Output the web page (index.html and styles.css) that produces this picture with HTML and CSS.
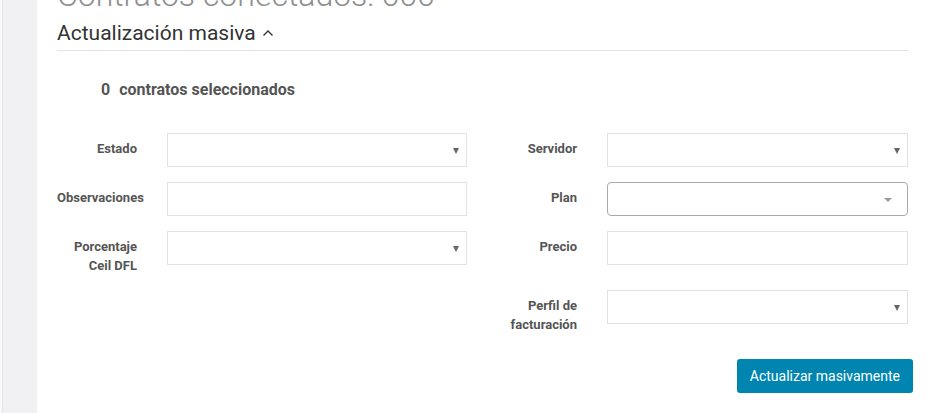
FILE: index.html
```html
<!DOCTYPE html>
<html lang="es">
<head>
    <meta charset="UTF-8">
    <title>Actualización masiva</title>
    <link rel="stylesheet" href="styles.css">
</head>
<body>
    <aside class="sidebar"></aside>

    <main class="content">
        <h1 class="page-title">Contratos conectados: 000</h1>

        <h2 class="section-title">
            Actualización masiva
            <svg class="chevron" width="12" height="8" viewBox="0 0 12 8"><path d="M1.5 6.5 L6 2 L10.5 6.5" fill="none" stroke="#333" stroke-width="1.4"/></svg>
        </h2>

        <p class="selected-count"><span class="count">0</span>contratos seleccionados</p>

        <div class="form-grid">
            <label class="form-label">Estado</label>
            <div class="field select"><span class="caret"></span></div>
            <label class="form-label">Servidor</label>
            <div class="field select"><span class="caret"></span></div>

            <label class="form-label">Observaciones</label>
            <input class="field" type="text">
            <label class="form-label">Plan</label>
            <div class="field select select2"><span class="caret light"></span></div>

            <label class="form-label">Porcentaje<br>Ceil DFL</label>
            <div class="field select"><span class="caret"></span></div>
            <label class="form-label">Precio</label>
            <input class="field" type="text">

            <div></div>
            <div></div>
            <label class="form-label">Perfil de<br>facturación</label>
            <div class="field select"><span class="caret"></span></div>
        </div>

        <div class="actions">
            <button class="btn-primary">Actualizar masivamente</button>
        </div>
    </main>
</body>
</html>
```

FILE: styles.css
```css
body {
    margin: 0;
    display: flex;
    min-height: 413px;
    font-family: Roboto, "Liberation Sans", sans-serif;
    background: #fff;
    overflow: hidden;
}
.sidebar {
    width: 37px;
    flex-shrink: 0;
    background: linear-gradient(to right, #f8f8f8 2px, #e3e3e5 2px 3px, #f1f1f3 3px);
}
.content {
    flex: 1;
    padding: 0 20px;
}
.page-title {
    margin: -24px 0 0;
    font-size: 32px;
    line-height: 38px;
    font-weight: 300;
    color: #8f8f8f;
    white-space: nowrap;
}
.section-title {
    margin: 7px 0 0;
    padding-bottom: 4px;
    border-bottom: 1px solid #e3e3e3;
    font-size: 21px;
    line-height: 25px;
    font-weight: 400;
    color: #333;
}
.chevron {
    margin-left: 1px;
    vertical-align: 3px;
}
.selected-count {
    margin: 29px 0 0 44px;
    font-size: 16px;
    line-height: 20px;
    font-weight: 700;
    color: #555;
}
.count {
    margin-right: 9px;
}
.form-grid {
    display: grid;
    grid-template-columns: 80px 300px 80px 1fr;
    column-gap: 30px;
    row-gap: 15px;
    margin-top: 33px;
}
.form-label {
    padding-top: 7px;
    font-size: 13px;
    line-height: 1.42857;
    font-weight: 700;
    color: #555;
    text-align: right;
}
.field {
    box-sizing: border-box;
    height: 34px;
    border: 1px solid #e2e2e2;
    background: #fff;
    margin: 0;
    font: inherit;
}
.select {
    display: flex;
    align-items: center;
    justify-content: flex-end;
    padding-right: 7px;
}
.select2 {
    border-color: #aaa;
    border-radius: 4px;
    padding-right: 15px;
}
.caret {
    width: 0;
    height: 0;
    border-left: 3px solid transparent;
    border-right: 3px solid transparent;
    border-top: 6px solid #666;
    margin-top: 1px;
}
.caret.light {
    border-left-width: 4px;
    border-right-width: 4px;
    border-top: 4px solid #999;
}
.actions {
    display: flex;
    justify-content: flex-end;
    margin: 25px -5px 0 0;
}
.btn-primary {
    height: 34px;
    padding: 0 13px;
    border: none;
    border-radius: 3px;
    background: #0085b0;
    color: #fff;
    font-family: Roboto, "Liberation Sans", sans-serif;
    font-size: 14px;
}
```
